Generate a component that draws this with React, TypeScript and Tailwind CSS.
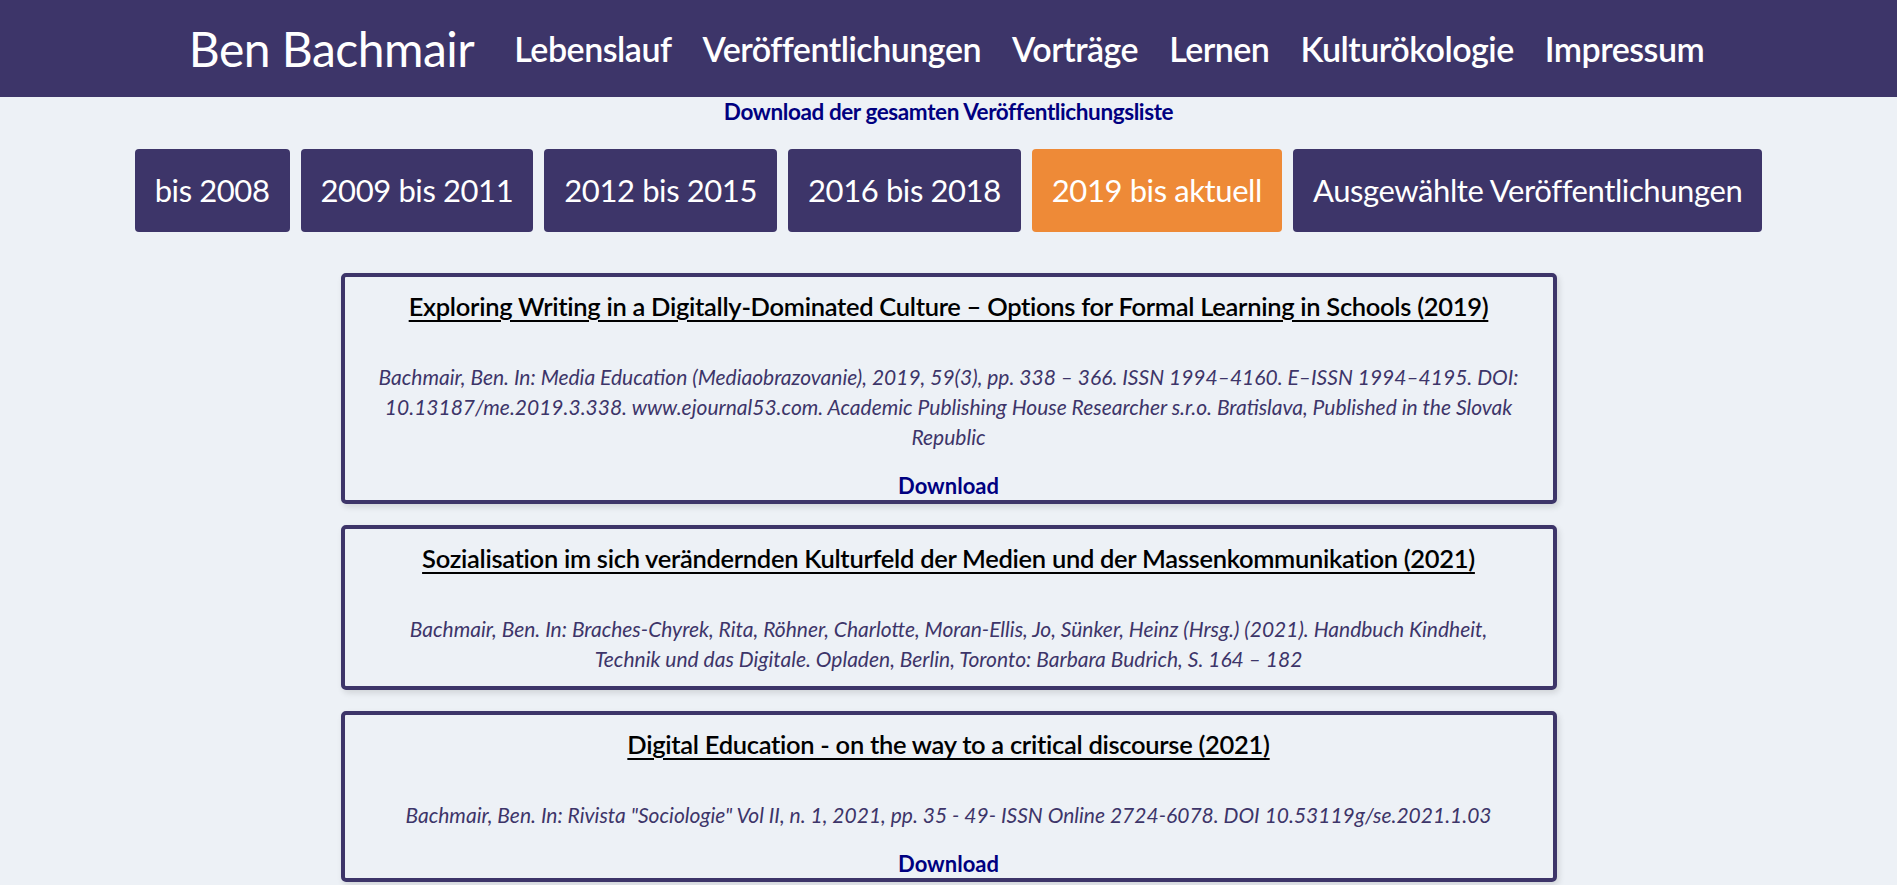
import React from 'react';

const navItems = ['Lebenslauf', 'Veröffentlichungen', 'Vorträge', 'Lernen', 'Kulturökologie', 'Impressum'];

const periods = [
    { label: 'bis 2008', active: false },
    { label: '2009 bis 2011', active: false },
    { label: '2012 bis 2015', active: false },
    { label: '2016 bis 2018', active: false },
    { label: '2019 bis aktuell', active: true },
    { label: 'Ausgewählte Veröffentlichungen', active: false },
];

type Pub = { title: string; citation: string[]; download: boolean };

// citation lines split where the original page wraps
const publications: Pub[] = [
    {
        title: 'Exploring Writing in a Digitally-Dominated Culture – Options for Formal Learning in Schools (2019)',
        citation: [
            'Bachmair, Ben. In: Media Education (Mediaobrazovanie), 2019, 59(3), pp. 338 – 366. ISSN 1994–4160. E–ISSN 1994–4195. DOI: 10.13187/me.2019.3.338. www.ejournal53.com. Academic Publishing House Researcher s.r.o. Bratislava, Published in the Slovak Republic',
        ],
        download: true,
    },
    {
        title: 'Sozialisation im sich verändernden Kulturfeld der Medien und der Massenkommunikation (2021)',
        citation: [
            'Bachmair, Ben. In: Braches-Chyrek, Rita, Röhner, Charlotte, Moran-Ellis, Jo, Sünker, Heinz (Hrsg.) (2021). Handbuch Kindheit,',
            'Technik und das Digitale. Opladen, Berlin, Toronto: Barbara Budrich, S. 164 – 182',
        ],
        download: false,
    },
    {
        title: 'Digital Education - on the way to a critical discourse (2021)',
        citation: [
            'Bachmair, Ben. In: Rivista "Sociologie" Vol II, n. 1, 2021, pp. 35 - 49- ISSN Online 2724-6078. DOI 10.53119g/se.2021.1.03',
        ],
        download: true,
    },
];

export default function App() {
    return (
        <div className="min-h-screen bg-[#edf1f6] font-['Lato',sans-serif]">
            {/* Header */}
            <header className="h-[97px] bg-[#3d3569] flex items-center justify-center">
                <div className="flex items-center gap-[40px] pr-[4px]">
                    <span className="text-white text-[48px] tracking-[-0.5px]">Ben Bachmair</span>
                    <nav className="flex items-center gap-[31px]">
                        {navItems.map((item) => (
                            <a key={item} className="text-white text-[34px] font-semibold tracking-[-0.5px] cursor-pointer">
                                {item}
                            </a>
                        ))}
                    </nav>
                </div>
            </header>

            {/* Download link */}
            <div className="text-center leading-[30px]">
                <a className="text-[#000080] text-[22.5px] font-bold tracking-[-0.4px] cursor-pointer">
                    Download der gesamten Veröffentlichungsliste
                </a>
            </div>

            {/* Period buttons */}
            <div className="flex justify-center gap-[11px] mt-[20px]">
                {periods.map((p) => (
                    <button
                        key={p.label}
                        className={
                            'h-[83px] px-[20px] rounded-[4px] text-white text-[31px] tracking-[-0.4px] ' +
                            (p.active ? 'bg-[#ee8a37]' : 'bg-[#3d3569]')
                        }
                    >
                        {p.label}
                    </button>
                ))}
            </div>

            {/* Publications */}
            <div className="flex flex-col items-center gap-[21px] mt-[41px] pb-10">
                {publications.map((pub) => (
                    <div
                        key={pub.title}
                        className="w-[1216px] border-4 border-[#3d3569] rounded-[5px] px-[14px] pt-[14px] pb-[0px] text-center shadow-[2px_3px_6px_rgba(0,0,0,0.12)]"
                    >
                        <h3 className="text-black text-[25.5px] font-semibold leading-[30px] underline underline-offset-[4px] tracking-[-0.3px]">
                            {pub.title}
                        </h3>
                        <p className="mt-[41px] mb-[12px] text-[#3d3569] text-[21px] italic leading-[30px]">
                            {pub.citation.map((line, i) => (
                                <React.Fragment key={i}>
                                    {i > 0 && <br />}
                                    {line}
                                </React.Fragment>
                            ))}
                        </p>
                        {pub.download && (
                            <a className="block pt-[8px] text-[#000080] text-[22px] font-bold leading-[28px] cursor-pointer">
                                Download
                            </a>
                        )}
                    </div>
                ))}
            </div>
        </div>
    );
}
